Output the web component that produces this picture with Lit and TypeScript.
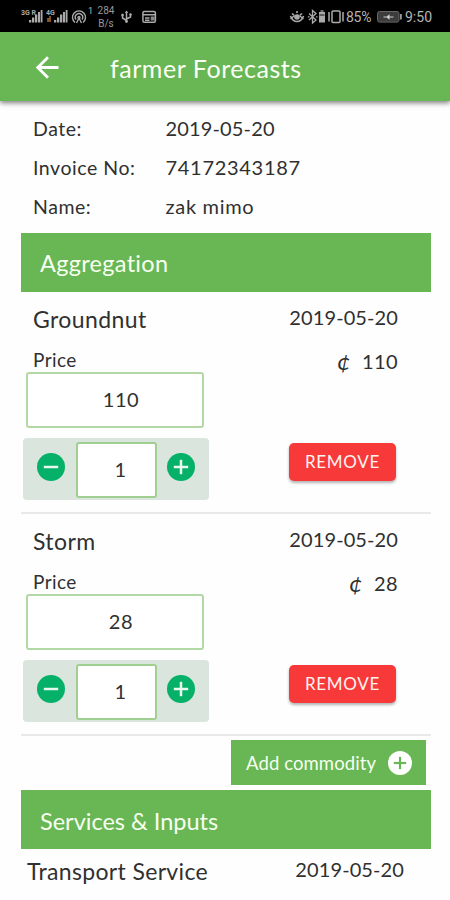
import { LitElement, html, svg, css } from "lit";
import { customElement, property } from "lit/decorators.js";

interface Commodity {
  name: string;
  date: string;
  price: number;
  quantity: number;
}

const GREEN = css`#68b654`;

@customElement("status-bar")
class StatusBar extends LitElement {
  static styles = css`
    :host {
      display: flex;
      justify-content: space-between;
      height: 32px;
      box-sizing: border-box;
      padding: 0 17px 0 20px;
      background: #000;
      color: #b5b5b5;
      font: 13px "Roboto", sans-serif;
    }
    .group {
      display: flex;
      align-items: center;
      height: 34px;
    }
    svg {
      display: block;
      flex: none;
    }
    .speed {
      width: 20px;
      margin-left: 3px;
      text-align: center;
      font-size: 10px;
      line-height: 13px;
      color: #999;
    }
    .speed .value {
      display: block;
      line-height: 12px;
    }
    .hotspots {
      align-self: flex-start;
      margin-top: 5px;
      font-size: 9px;
      width: 5px;
      line-height: 12px;
    }
    .net {
      font: 700 7px "Roboto", sans-serif;
      fill: #aaa;
    }
    .percent {
      width: 29px;
      font-size: 14px;
      letter-spacing: -0.3px;
    }
    .clock {
      width: 28px;
      margin-left: 1px;
      font-size: 14px;
      letter-spacing: 0;
    }
  `;

  private signal(label: string, second: string) {
    return html`<svg width="25" height="18" viewBox="0 0 25 18">
      <text class="net" x="1" y="7">${label}</text>
      <text class="net" x="2" y="14">${second}</text>
      <g fill="#aaa">
        <rect x="9" y="12" width="2.300" height="2.500" />
        <rect x="12" y="9.500" width="2.300" height="5" />
        <rect x="15" y="6.500" width="2.300" height="8" />
        <rect x="18" y="4" width="2.100" height="10.500" />
        <rect x="20.700" y="2" width="1.800" height="12.500" />
      </g>
    </svg>`;
  }

  render() {
    return html`
      <div class="group">
        ${this.signal("3G R", "")}${this.signal("4G", "ıl")}
        <svg width="18" height="18" viewBox="-0.500 0 18 18" fill="none" stroke="#aaa" stroke-width="1.400">
          <path d="M4.500 14.500A6.500 6.500 0 1 1 12.500 14.500" />
          <path d="M5.500 11.500A3.700 3.700 0 1 1 11.500 11.500" />
          <circle cx="8.500" cy="9.500" r="1" />
          <path d="M8.500 10L6 15M8.500 10L11 15" />
        </svg>
        <span class="hotspots">1</span>
        <span class="speed"><span class="value">284</span>B/s</span>
        <svg width="26" height="18" viewBox="2 0 26 18" fill="none" stroke="#aaa" stroke-width="1.500">
          <path d="M12.500 3.500V14M12.500 12.500L8.500 10V7M12.500 11L16.500 9V6.500" />
          <path d="M10.800 5L12.500 2.500L14.200 5Z" fill="#aaa" stroke="none" />
          <circle cx="12.500" cy="13.500" r="1.400" fill="#aaa" stroke="none" />
          <rect x="7.300" y="5.800" width="2.400" height="2.400" fill="#aaa" stroke="none" />
          <circle cx="16.500" cy="6.500" r="1.300" fill="#aaa" stroke="none" />
        </svg>
        <svg width="15" height="18" viewBox="1 0 15 18" fill="none" stroke="#aaa" stroke-width="1.500">
          <rect x="1.900" y="3.500" width="12.500" height="10.800" rx="1.500" />
          <path d="M2 6.800H14.500M4 10H8.500M4 12.300H8.500" />
          <rect x="9.700" y="8.500" width="4" height="4" fill="#888" stroke="none" />
        </svg>
      </div>
      <div class="group">
        <svg width="18" height="18" viewBox="0 0 18 18" fill="none" stroke="#aaa" stroke-width="1.600">
          <path d="M1.500 8Q3.500 13.500 8 13.500Q12.500 13.500 14.500 8M3 5.500L5 7.200M8 5V3M13 5.500L11 7.200" />
          <path d="M1.500 11Q5 8 5.500 7.500M14.500 11Q11 8 10.500 7.500" stroke-width="1.200" />
          <circle cx="8" cy="9" r="2.800" fill="#aaa" stroke="none" />
        </svg>
        <svg width="20" height="18" viewBox="0 0 20 18" fill="none" stroke="#aaa" stroke-width="1.300">
          <path d="M2 5.500L9 12L5.500 15V2.500L9 5.500L2 12M0.800 8.800H2.500M9 8.800H10.500" />
          <rect x="12" y="4" width="6" height="10.500" fill="#aaa" stroke="none" />
          <path d="M13.500 3H16.500" />
          <path d="M12.500 7H17.500" stroke="#333" />
        </svg>
        <svg width="19" height="18" viewBox="0.500 0 19 18" fill="none" stroke="#aaa" stroke-width="1.500">
          <rect x="5.500" y="3" width="8" height="11.500" rx="1" />
          <path d="M2.500 4V13.500M16.500 4V13.500" />
        </svg>
        <span class="percent">85%</span>
        <svg width="29" height="18" viewBox="1 0 29 18" fill="none">
          <rect x="3.500" y="3.500" width="21.500" height="10.600" rx="2" fill="#3c3c3c" stroke="#666" />
          <rect x="26" y="6" width="1.800" height="5.500" fill="#999" />
          <path d="M9.500 9H19.500M13 9L15 7.500V10.500Z" stroke="#ccc" stroke-width="1.200" fill="#ccc" />
        </svg>
        <span class="clock">9:50</span>
      </div>
    `;
  }
}

@customElement("round-icon")
class RoundIcon extends LitElement {
  @property() kind = "plus";
  static styles = css`
    :host {
      display: block;
      width: 28px;
      height: 28px;
    }
    svg {
      display: block;
      width: 100%;
      height: 100%;
    }
    .disc {
      fill: var(--disc, #05b168);
    }
    .mark {
      stroke: var(--mark, #e9f8ef);
      stroke-width: 2.5;
    }
  `;
  render() {
    return html`<svg viewBox="0 0 28 28">
      <circle class="disc" cx="14" cy="14" r="14" />
      <path class="mark" d="M6.800 14H21.200" />
      ${this.kind === "plus" ? svg`<path class="mark" d="M14 6.800V21.200" />` : null}
    </svg>`;
  }
}

@customElement("commodity-item")
class CommodityItem extends LitElement {
  @property({ attribute: false }) item!: Commodity;
  static styles = css`
    :host {
      display: flex;
      justify-content: space-between;
      box-sizing: border-box;
      height: 222px;
      margin: 0 19px 0 21px;
      padding: 11px 33px 0 2px;
      border-bottom: 2px solid #e9e9e9;
    }
    .left,
    .right {
      display: flex;
      flex-direction: column;
    }
    .right {
      align-items: flex-end;
    }
    .name {
      padding-left: 10px;
      font-size: 23px;
      line-height: 32px;
      letter-spacing: 0.4px;
    }
    .label {
      padding-left: 10px;
      margin-top: 12px;
      font-size: 19px;
      line-height: 25px;
      letter-spacing: 0.4px;
    }
    .field {
      box-sizing: border-box;
      display: grid;
      place-items: center;
      border: 2px solid #b2d9a5;
      border-radius: 3px;
      background: #fff;
      padding: 0 0 2px 12px;
      font-size: 20px;
      letter-spacing: 0.6px;
    }
    .price {
      width: 178px;
      height: 56px;
      margin-left: 3px;
    }
    .stepper {
      display: grid;
      grid-template-columns: 28px 81px 28px;
      column-gap: 10.5px;
      box-sizing: border-box;
      width: 186px;
      height: 62px;
      margin-top: 10px;
      padding: 4px 0 0 14px;
      border-radius: 4px;
      background: #dae5dd;
    }
    .stepper round-icon {
      margin-top: 11px;
    }
    .stepper round-icon[kind="plus"] {
      margin-left: -0.5px;
    }
    .quantity {
      height: 56px;
      padding: 0 0 2px 9px;
      border-color: #a0cf91;
    }
    .date {
      margin-top: 2px;
      font-size: 20px;
      line-height: 24px;
      letter-spacing: 0.1px;
    }
    .amount {
      display: flex;
      gap: 11px;
      margin-top: 20px;
      font-size: 20px;
      line-height: 24px;
      letter-spacing: 0.4px;
    }
    .cedi {
      font-style: italic;
      font-size: 24px;
    }
    .remove {
      width: 107px;
      height: 38px;
      margin: 70px 2px 0 0;
      padding: 0 0 1px;
      border: 0;
      border-radius: 5px;
      background: #f8393a;
      box-shadow: 0 2px 3px #0000004d;
      color: #fff3f0;
      font: 17px "Lato", sans-serif;
      letter-spacing: 0.7px;
    }
  `;
  render() {
    const { name, date, price, quantity } = this.item;
    return html`
      <div class="left">
        <div class="name">${name}</div>
        <div class="label">Price</div>
        <div class="field price">${price}</div>
        <div class="stepper">
          <round-icon kind="minus"></round-icon>
          <div class="field quantity">${quantity}</div>
          <round-icon kind="plus"></round-icon>
        </div>
      </div>
      <div class="right">
        <div class="date">${date}</div>
        <div class="amount"><span class="cedi">¢</span><span>${price * quantity}</span></div>
        <button class="remove">REMOVE</button>
      </div>
    `;
  }
}

@customElement("app-root")
class AppRoot extends LitElement {
  private items: Commodity[] = [
    { name: "Groundnut", date: "2019-05-20", price: 110, quantity: 1 },
    { name: "Storm", date: "2019-05-20", price: 28, quantity: 1 },
  ];
  static styles = css`
    :host {
      display: block;
      height: 900px;
      overflow: hidden;
      background: #fefefe;
      color: #303030;
      font-family: "Lato", sans-serif;
    }
    .toolbar {
      display: flex;
      align-items: center;
      height: 69px;
      padding-left: 34px;
      box-sizing: border-box;
      background: ${GREEN};
      box-shadow: 0 2px 5px #00000080;
      color: #fbfff5;
    }
    .toolbar svg {
      display: block;
      width: 26px;
      height: 26px;
      margin-right: 50px;
    }
    .title {
      padding-top: 2px;
      font-size: 25px;
      letter-spacing: 0.55px;
    }
    .info {
      display: grid;
      grid-template-columns: 132.5px auto;
      grid-auto-rows: 39px;
      align-items: center;
      height: 132px;
      box-sizing: border-box;
      padding: 8px 0 0 33px;
      font-size: 20px;
    }
    .info .key {
      font-size: 19.5px;
      letter-spacing: 0.55px;
    }
    .info .val {
      padding-bottom: 2px;
      letter-spacing: 0.15px;
    }
    .info .wide {
      letter-spacing: 0.7px;
    }
    .band {
      display: flex;
      align-items: center;
      box-sizing: border-box;
      height: 59px;
      margin: 0 19px 0 20.5px;
      padding: 1px 0 0 19.5px;
      background: ${GREEN};
      color: #f7fff0;
      font-size: 23.5px;
      letter-spacing: 0.3px;
    }
    .band.services {
      margin-top: 5px;
      padding-top: 3px;
      letter-spacing: 0;
    }
    .add {
      display: flex;
      align-items: center;
      justify-content: space-between;
      box-sizing: border-box;
      width: 195px;
      height: 45px;
      margin: 4px 24px 0 auto;
      padding: 0 14px 0 15px;
      background: ${GREEN};
      color: #f7fff0;
      font-size: 18.5px;
      letter-spacing: 0.1px;
    }
    .add round-icon {
      --disc: #fff;
      --mark: #68b654;
      width: 24px;
      height: 24px;
    }
    .service {
      display: flex;
      justify-content: space-between;
      padding: 6px 46px 0 27px;
      line-height: 32px;
      font-size: 23px;
      letter-spacing: 0.35px;
    }
    .service .date {
      margin-top: -2px;
      font-size: 20px;
      letter-spacing: 0.1px;
    }
  `;
  render() {
    return html`
      <status-bar></status-bar>
      <header class="toolbar">
        <svg viewBox="0 0 26 26" fill="none" stroke="#fff" stroke-width="2.800">
          <path d="M24.500 13.500H3.500M14 3.200L3.700 13.500L14 23.800" />
        </svg>
        <span class="title">farmer Forecasts</span>
      </header>
      <section class="info">
        <span class="key">Date:</span><span class="val">2019-05-20</span>
        <span class="key">Invoice No:</span><span class="val wide">74172343187</span>
        <span class="key">Name:</span><span class="val wide">zak mimo</span>
      </section>
      <div class="band">Aggregation</div>
      ${this.items.map((item) => html`<commodity-item .item=${item}></commodity-item>`)}
      <div class="add"><span>Add commodity</span><round-icon></round-icon></div>
      <div class="band services">Services &amp; Inputs</div>
      <div class="service"><span class="name">Transport Service</span><span class="date">2019-05-20</span></div>
    `;
  }
}
